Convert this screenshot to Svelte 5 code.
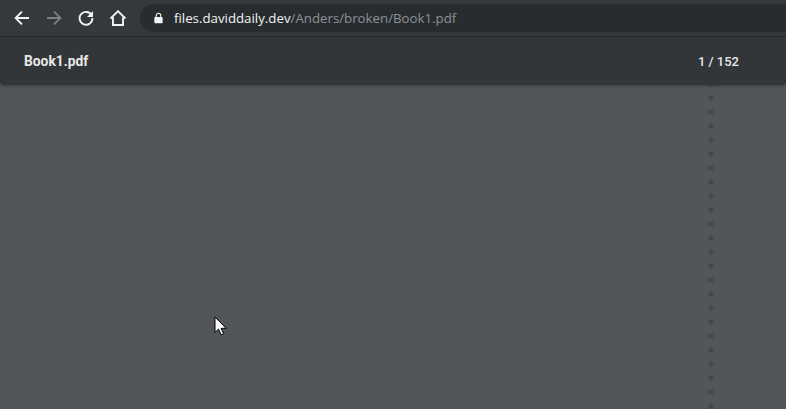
<script lang="ts">
	const host = 'files.daviddaily.dev';
	const path = '/Anders/broken/Book1.pdf';
</script>

<div class="window">
	<header class="browser-bar">
		<nav class="nav-buttons">
			<svg class="nav-icon" viewBox="0 0 16 16" aria-label="Back">
				<path d="M15 8H2M8 1.600 1.600 8 8 14.400" />
			</svg>
			<svg class="nav-icon disabled" viewBox="0 0 16 16" aria-label="Forward">
				<path d="M1 8h13M8 1.600 14.400 8 8 14.400" />
			</svg>
			<svg class="nav-icon" viewBox="0 0 16 16" aria-label="Reload">
				<path d="M13.600 5.200A6.400 6.400 0 1 0 14.400 8" />
				<path class="solid" d="M15 1v6H9z" />
			</svg>
			<svg class="nav-icon home" viewBox="0 0 16 16" aria-label="Home">
				<path d="M3 7.500V15h10V7.500M.6 8.600 8 1.200l7.400 7.400" />
			</svg>
		</nav>
		<div class="omnibox">
			<svg class="lock" viewBox="0 0 10 12" aria-hidden="true">
				<path d="M1.200 5h7.600a.8.8 0 0 1 .8.8v5.100a.8.8 0 0 1-.8.8H1.200a.8.8 0 0 1-.8-.8V5.800a.8.8 0 0 1 .8-.8z" />
				<path class="shackle" d="M2.500 5.500V3.200a2.500 2.500 0 0 1 5 0v2.300" />
			</svg>
			<span class="url"><span class="host">{host}</span>{path}</span>
		</div>
	</header>

	<div class="pdf-toolbar">
		<span class="title">Book1.pdf</span>
		<span class="pages">1 / 152</span>
	</div>

	<main class="viewer">
		<div class="dots"></div>
		<svg class="cursor" viewBox="0 0 14 20" aria-hidden="true">
			<path d="M1 1v15.500l3.600-3.400 2.500 5.700 2.500-1-2.500-5.500h5z" />
		</svg>
	</main>
</div>

<style>
	:global(body) {
		margin: 0;
		background: #525659;
	}

	.window {
		display: flex;
		flex-direction: column;
		width: 786px;
		height: 409px;
		overflow: hidden;
		font-family: 'Open Sans', 'Liberation Sans', sans-serif;
	}

	.browser-bar {
		display: flex;
		flex: none;
		align-items: center;
		box-sizing: border-box;
		height: 37px;
		padding: 0 0 1px 14px;
		background: #35393c;
		border-bottom: 1px solid #28282a;
	}

	.nav-buttons {
		display: flex;
		align-items: center;
		gap: 16px;
		width: 126px;
	}

	.nav-icon {
		width: 16px;
		height: 16px;
		fill: none;
		stroke: #f1f3f4;
		stroke-width: 1.9;
	}

	.nav-icon .solid {
		fill: #f1f3f4;
		stroke: none;
	}

	.nav-icon.disabled {
		stroke: #7d8083;
	}

	.omnibox {
		display: flex;
		flex: 1;
		align-items: center;
		height: 28px;
		padding-left: 14px;
		background: #292c2f;
		border-radius: 14px 0 0 14px;
	}

	.lock {
		width: 9px;
		height: 12px;
		margin-right: 11px;
		fill: #f1f3f4;
	}

	.lock .shackle {
		fill: none;
		stroke: #f1f3f4;
		stroke-width: 1.2;
	}

	.url {
		font-size: 13.27px;
		color: #8a9299;
	}

	.host {
		color: #f1f3f4;
	}

	.pdf-toolbar {
		position: relative;
		z-index: 1;
		display: flex;
		flex: none;
		align-items: center;
		justify-content: space-between;
		height: 48px;
		padding: 0 47px 0 24px;
		background: #323639;
		border-radius: 0 0 4px 4px;
		box-shadow: 0 1px 3px rgba(0, 0, 0, 0.3);
		font-family: Roboto, 'Liberation Sans', sans-serif;
		font-weight: 700;
		color: #e8e8e8;
	}

	.title {
		font-size: 13.8px;
	}

	.pages {
		font-size: 13px;
		font-weight: 500;
	}

	.viewer {
		position: relative;
		display: flex;
		flex: 1;
		justify-content: flex-end;
		padding-right: 70px;
		background: #525659;
	}

	.dots {
		width: 10px;
		background-image: radial-gradient(circle, #434649 0, #45484b 1.5px, rgba(69, 72, 75, 0) 4px);
		background-position: 0 6px;
		background-size: 10px 14px;
	}

	.cursor {
		position: absolute;
		left: 214px;
		top: 231px;
		width: 14px;
		height: 20px;
		fill: #fff;
		stroke: #000;
		stroke-width: 1;
	}
</style>
